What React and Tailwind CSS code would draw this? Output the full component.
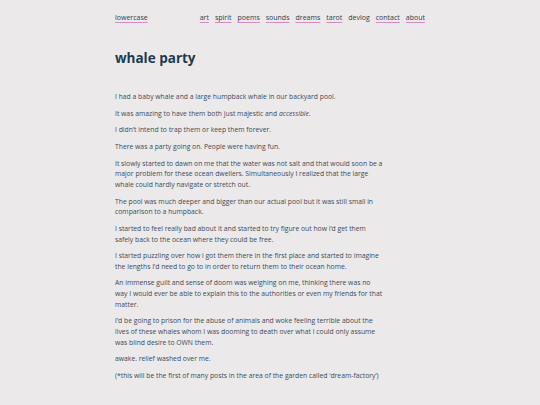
const navLinks = ['art', 'spirit', 'poems', 'sounds', 'dreams', 'tarot', 'devlog', 'contact', 'about'];

const paragraphs = [
  <>I had a baby whale and a large humpback whale in our backyard pool.</>,
  <>It was amazing to have them both just majestic and <em>accessible</em>.</>,
  <>I didn’t intend to trap them or keep them forever.</>,
  <>There was a party going on. People were having fun.</>,
  <>It slowly started to dawn on me that the water was not salt and that would soon be a major problem for these ocean dwellers. Simultaneously I realized that the large whale could hardly navigate or stretch out.</>,
  <>The pool was much deeper and bigger than our actual pool but it was still small in comparison to a humpback.</>,
  <>I started to feel really bad about it and started to try figure out how i’d get them safely back to the ocean where they could be free.</>,
  <>I started puzzling over how i got them there in the first place and started to imagine the lengths I’d need to go to in order to return them to their ocean home.</>,
  <>An immense guilt and sense of doom was weighing on me, thinking there was no way I would ever be able to explain this to the authorities or even my friends for that matter.</>,
  <>I’d be going to prison for the abuse of animals and woke feeling terrible about the lives of these whales whom I was dooming to death over what I could only assume was blind desire to OWN them.</>,
  <>awake. relief washed over me.</>,
  <>(*this will be the first of many posts in the area of the garden called ‘dream-factory’)</>,
];

const linkClass = 'text-[#2c3e4c] underline decoration-[#d58cc4] decoration-1 underline-offset-[2px]';

export default function App() {
  return (
    <div className="min-h-screen bg-[#ece9ea] font-['Open_Sans','Noto_Sans',sans-serif]">
      <div className="mx-auto w-[310px] pt-[12px]">
        {/* header nav */}
        <nav className="flex items-center justify-between text-[7px] leading-[12px]">
          <a href="#" className={linkClass}>lowercase</a>
          <div className="flex gap-[6px]">
            {navLinks.map((l) => (
              <a key={l} href="#" className={l === 'devlog' ? 'text-[#2c3e4c]' : linkClass}>{l}</a>
            ))}
          </div>
        </nav>

        <h1 className="mt-[25px] text-[13.5px] font-bold leading-[18px] text-[#1c3b4e]">whale party</h1>

        {/* post body */}
        <article className="mt-[25px] w-[269px] text-[6.8px] leading-[10.6px] text-[#3d4b57]">
          {paragraphs.map((p, i) => (
            <p key={i} className="mb-[6.1px]">{p}</p>
          ))}
        </article>
      </div>
    </div>
  );
}
